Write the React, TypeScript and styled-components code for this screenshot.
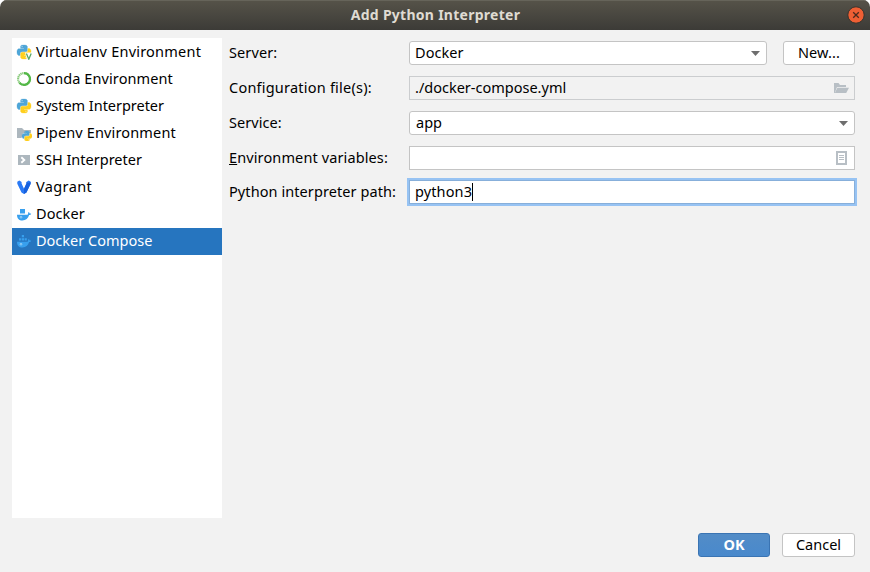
import React from "react";
import styled, { createGlobalStyle, css } from "styled-components";

const Global = createGlobalStyle`
  * { box-sizing: border-box; }
  html, body { margin: 0; padding: 0; background: #fff; }
  body { font-family: "Noto Sans", sans-serif; font-size: 14.5px; color: #000; overflow: hidden; }
`;

const Dialog = styled.div`
  width: 870px;
  height: 572px;
  display: flex;
  flex-direction: column;
  background: #f2f2f2;
  border-radius: 7px 7px 0 0;
  overflow: hidden;
`;

const TitleBar = styled.header`
  height: 30px;
  flex: none;
  display: grid;
  grid-template-columns: 30px 1fr 28px;
  padding-right: 1px;
  align-items: center;
  justify-items: center;
  background: linear-gradient(#565349, #3c3b37);
  box-shadow: inset 0 1px 0 #66645a;
  color: #dfdbd2;
  font-weight: 700;
  font-size: 14px;
`;

const CloseButton = styled.button`
  width: 18px;
  height: 18px;
  padding: 0;
  margin-left: 2px;
  border: 0;
  background: none;
  display: flex;
`;

const Main = styled.main`
  height: 488px;
  padding: 8px 15px 0 12px;
  display: flex;
  gap: 7px;
`;

const List = styled.nav`
  width: 210px;
  height: 480px;
  flex: none;
  padding-top: 1px;
  background: #fff;
`;

const ListItem = styled.div<{ $selected?: boolean }>`
  height: 27px;
  display: flex;
  align-items: flex-start;
  gap: 4px;
  padding-left: 4px;
  ${(p) => p.$selected && css`background: #2675bf; color: #fff;`}
  svg { flex: none; display: block; margin-top: 5px; }
`;

const Label = styled.span<{ $track?: number }>`
  white-space: pre;
  line-height: 24px;
  letter-spacing: ${(p) => p.$track ?? 0}px;
`;

const FormLabel = styled(Label)<{ $raised?: boolean }>`
  height: 24px;
  margin-top: ${(p) => (p.$raised ? -2 : -1)}px;
`;

const Form = styled.section`
  flex: 1;
  display: grid;
  grid-template-columns: 180px 1fr;
  grid-template-rows: 24px 24px 24px 24px 24px;
  row-gap: 11px;
  align-content: start;
  padding-top: 3px;
`;

const ServerRow = styled.div`
  display: grid;
  grid-template-columns: 358px 72px;
  gap: 16px;
`;

const Field = styled.div<{ $round?: boolean; $disabled?: boolean; $focus?: boolean; $indent?: number }>`
  height: 24px;
  display: flex;
  align-items: center;
  justify-content: space-between;
  padding: 0 5px 0 ${(p) => p.$indent ?? 5}px;
  border: 1px solid ${(p) => (p.$focus ? "#87afda" : p.$disabled ? "#cbcdcf" : "#c4c4c4")};
  border-radius: ${(p) => (p.$round ? 3 : 0)}px;
  background: ${(p) => (p.$disabled ? "#f2f2f2" : "#fff")};
  ${(p) => p.$focus && css`box-shadow: 0 0 0 2px #97c3f3; margin-top: -1px;`}
  svg { flex: none; }
  ${Label} { margin-top: -2px; }
`;

const Entry = styled.div`
  display: flex;
  align-items: center;
`;

const Caret = styled.i`
  width: 1px;
  height: 18px;
  background: #000;
`;

const Button = styled.button<{ $primary?: boolean; $w: number }>`
  width: ${(p) => p.$w}px;
  height: 24px;
  padding: 0;
  display: flex;
  align-items: center;
  justify-content: center;
  font: inherit;
  border: 1px solid #c4c4c4;
  border-radius: 3px;
  background: #fff;
  color: #000;
  ${(p) => p.$primary && css`
    border-color: #3a74b3;
    background: linear-gradient(#528cc7, #4989cc);
    color: #fff;
    font-weight: 700;
  `}
  ${Label} { margin-top: -2px; }
`;

const Footer = styled.footer`
  display: flex;
  justify-content: flex-end;
  gap: 12px;
  padding: 15px 15px 0 0;
`;

const SNAKE =
  "M14.25.18l.9.2.73.26.59.3.45.32.34.34.25.34.16.33.1.3.04.26.02.2-.01.13V8.5l-.05.63-.13.55-.21.46-.26.38-.3.31-.33.25-.35.19-.35.14-.33.1-.3.07-.26.04-.21.02H8.77l-.69.05-.59.14-.5.22-.41.27-.33.32-.27.35-.2.36-.15.37-.1.35-.07.32-.04.27-.02.21v3.06H3.17l-.21-.03-.28-.07-.32-.12-.35-.18-.36-.26-.36-.36-.35-.46-.32-.59-.28-.73-.21-.88-.14-1.05-.05-1.23.06-1.22.16-1.04.24-.87.32-.71.36-.57.4-.44.42-.33.42-.24.4-.16.36-.1.32-.05.24-.01h.16l.06.01h8.16v-.83H6.18l-.01-2.75-.02-.37.05-.34.11-.31.17-.28.25-.26.31-.23.38-.2.44-.18.51-.15.58-.12.64-.1.71-.06.77-.04.84-.02 1.27.05zm-6.3 1.98l-.23.33-.08.41.08.41.23.34.33.22.41.09.41-.09.33-.22.23-.34.08-.41-.08-.41-.23-.33-.33-.22-.41-.09-.41.09z";

const Snakes = ({ x, y, size }: { x: number; y: number; size: number }) => (
  <g transform={`translate(${x} ${y}) scale(${size / 24})`}>
    <path d={SNAKE} fill="#4fa6d8" stroke="#4fa6d8" strokeWidth=".5" />
    <path d={SNAKE} fill="#ffd01e" stroke="#ffd01e" strokeWidth=".5" transform="rotate(180 12 12)" />
  </g>
);

const Icon = ({ children }: { children: React.ReactNode }) => (
  <svg width="16" height="16" viewBox="0 0 16 16">{children}</svg>
);

const PythonIcon = () => <Icon><Snakes x={1} y={1} size={14} /></Icon>;

const VirtualenvIcon = () => (
  <Icon>
    <Snakes x={1} y={1} size={14} />
    <path d="M9 8.600h7V16h-5z" fill="#fff" />
    <path d="M10.400 9.400l2.400 5.800 2.400-5.800" fill="none" stroke="#59a869" strokeWidth="1.300" />
  </Icon>
);

const CondaIcon = () => (
  <Icon>
    <circle cx="8" cy="8" r="5.900" fill="none" stroke="#8bcb7e" strokeWidth="2.100" strokeDasharray="1.300 .5" />
    <path d="M8 2.100a5.900 5.900 0 1 1-4.600 9.500" fill="none" stroke="#54b848" strokeWidth="2.200" />
  </Icon>
);

const PipenvIcon = () => (
  <Icon>
    <path d="M1 3h5l2 2h7v3H7L5.500 13H1z" fill="#adb7be" />
    <Snakes x={6} y={6} size={10} />
  </Icon>
);

const SshIcon = () => (
  <Icon>
    <path d="M2 3h12v10H2z" fill="#adb7be" />
    <path d="M5.300 5.200L8.300 8l-3 2.800" fill="none" stroke="#fff" strokeWidth="1.900" />
  </Icon>
);

const VagrantIcon = () => (
  <Icon>
    <path d="M1.300 2.800l2-1.200L5.600 2.900v1.500L8 9.700l2.400-5.300V2.900l2.300-1.300 2 1.200v1.900L10.500 13.500 8 14.900l-2.500-1.400L1.300 4.700z" fill="#2a7af5" />
    <path d="M12.600 4.100l2.100-1.300v1.900L10.500 13.500 8 14.900v-5.200l2.400-5.300V2.900z" fill="#1259d6" opacity=".75" />
  </Icon>
);

const Hull = () => (
  <>
    <path d="M1 8.700h10.200c.9-.1 1.100-.8.8-1.700l.7-.9c.7.5.9 1 1 1.500.6-.1 1.200 0 1.500.2-.3.8-1 1.200-2.100 1.300C12.200 12.500 9.800 14.500 6.400 14.500 3 14.500 1 12.500 1 8.700z" fill="#38a0ee" />
    <circle cx="5" cy="11.200" r=".9" fill="none" stroke="#b9def8" strokeWidth=".7" />
  </>
);

const DockerIcon = () => (
  <Icon>
    <path d="M4 3h5v4.600H4z" fill="#38a0ee" />
    <Hull />
  </Icon>
);

const ComposeIcon = () => (
  <Icon>
    <path d="M5.800 2H8v2.200H5.800zM3 5.200h2.200v2.400H3zM5.800 5.200H8v2.400H5.800zM8.600 5.200h2.200v2.400H8.600z" fill="#38a0ee" />
    <Hull />
  </Icon>
);

const Arrow = () => (
  <svg width="11" height="16" viewBox="0 0 11 16"><path d="M1 6h9l-4.500 5z" fill="#6e6e6e" /></svg>
);

const FolderIcon = () => (
  <Icon>
    <path d="M1 13V3h4.500l1.500 2h6v2H4L1.800 13z" fill="#b8bfc5" />
    <path d="M4.400 7.800H16L13.200 13H1.800z" fill="#b8bfc5" />
  </Icon>
);

const DocIcon = () => (
  <Icon>
    <path d="M4 2h9v12H4z" fill="none" stroke="#b8bfc5" strokeWidth="2" />
    <path d="M6 5.500h5M6 7.500h5M6 9.500h5" stroke="#b8bfc5" />
  </Icon>
);

const items: { text: string; track: number; icon: React.FC }[] = [
  { text: "Virtualenv Environment", track: 0.22, icon: VirtualenvIcon },
  { text: "Conda Environment", track: 0.1, icon: CondaIcon },
  { text: "System Interpreter", track: -0.03, icon: PythonIcon },
  { text: "Pipenv Environment", track: 0.15, icon: PipenvIcon },
  { text: "SSH Interpreter", track: 0, icon: SshIcon },
  { text: "Vagrant", track: 0.38, icon: VagrantIcon },
  { text: "Docker", track: 0.1, icon: DockerIcon },
  { text: "Docker Compose", track: 0, icon: ComposeIcon },
];

export default function App() {
  return (
    <>
      <Global />
      <Dialog>
        <TitleBar>
          <span />
          <Label $track={0.27}>Add Python Interpreter</Label>
          <CloseButton aria-label="Close">
            <svg width="18" height="18" viewBox="0 0 18 18">
              <circle cx="9" cy="9" r="8.200" fill="#ee5f34" stroke="#35332d" />
              <path d="M6.200 6.200l5.600 5.600M11.800 6.200l-5.600 5.600" stroke="#4a2a1e" strokeWidth="1.300" />
            </svg>
          </CloseButton>
        </TitleBar>
        <Main>
          <List>
            {items.map(({ text, track, icon: ItemIcon }, i) => (
              <ListItem key={text} $selected={i === 7}>
                <ItemIcon />
                <Label $track={track}>{text}</Label>
              </ListItem>
            ))}
          </List>
          <Form>
            <FormLabel $track={0.1}>Server:</FormLabel>
            <ServerRow>
              <Field $round><Label $track={0.05}>Docker</Label><Arrow /></Field>
              <Button $w={72}><Label $track={0.1}>New...</Label></Button>
            </ServerRow>
            <FormLabel $track={0.22}>Configuration file(s):</FormLabel>
            <Field $disabled><Label>./docker-compose.yml</Label><FolderIcon /></Field>
            <FormLabel $track={0.05}>Service:</FormLabel>
            <Field $round $indent={6}><Label>app</Label><Arrow /></Field>
            <FormLabel $track={0.12}><u>E</u>nvironment variables:</FormLabel>
            <Field><span /><DocIcon /></Field>
            <FormLabel $raised $track={0.08}>Python interpreter path:</FormLabel>
            <Field $focus><Entry><Label $track={0.12}>python3</Label><Caret /></Entry></Field>
          </Form>
        </Main>
        <Footer>
          <Button $w={72} $primary><Label>OK</Label></Button>
          <Button $w={73}><Label>Cancel</Label></Button>
        </Footer>
      </Dialog>
    </>
  );
}
